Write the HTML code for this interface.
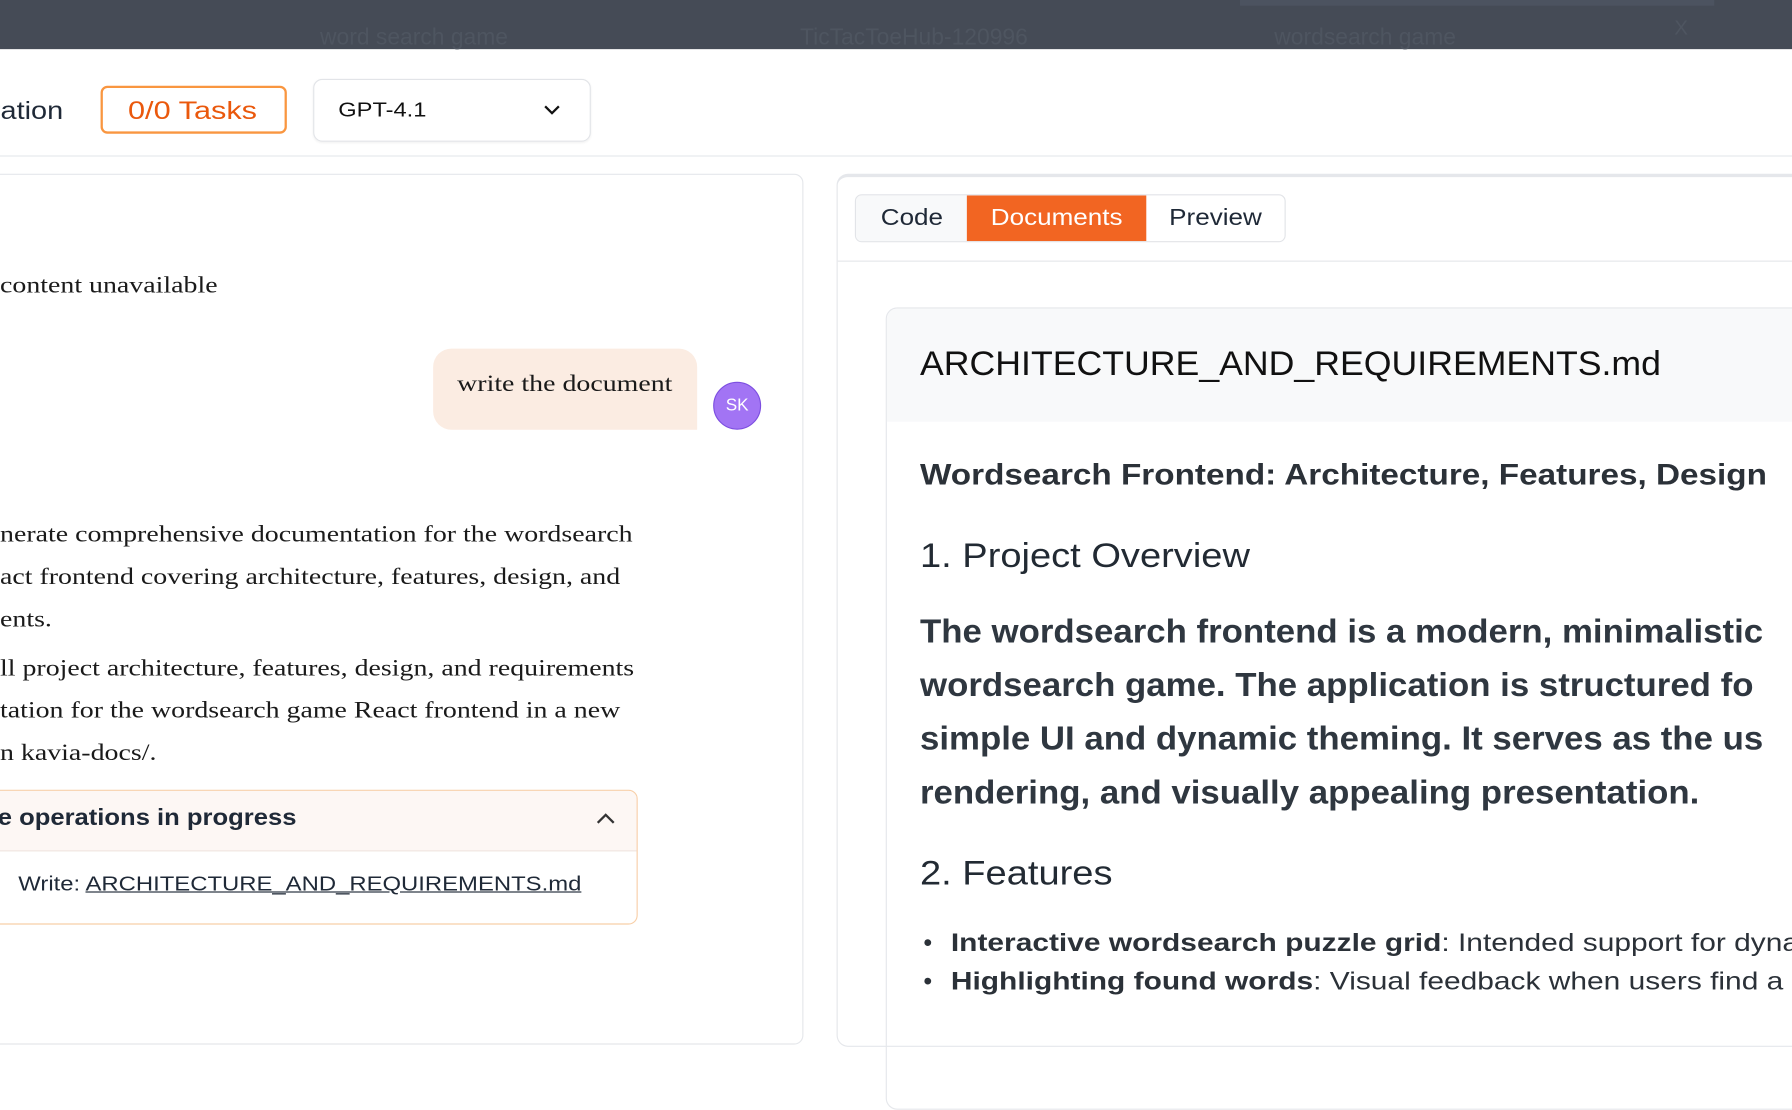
<!DOCTYPE html>
<html><head><meta charset="utf-8"><style>
html,body{margin:0;padding:0;width:1792px;height:980px;overflow:hidden;background:#fff}
#w{position:absolute;left:0;top:0;width:1568px;height:858px;transform:scale(1.142857);transform-origin:0 0;font-family:"Liberation Sans",sans-serif;color:#1f2937}
.a{position:absolute;white-space:nowrap;transform-origin:0 0}
.serif{font-family:"Liberation Serif",serif;font-size:20px;color:#1a1a1a;transform:scaleX(1.22)}
</style></head><body><div id="w">
<div class="a" style="left:0;top:0;width:1568px;height:43px;background:#454b56"></div>
<div class="a" style="left:1085px;top:0;width:415px;height:5px;background:#4c5360"></div>
<div class="a" style="left:280px;top:22px;font-size:20px;color:#4e5560">word search game</div>
<div class="a" style="left:700px;top:22px;font-size:20px;color:#4e5560">TicTacToeHub-120996</div>
<div class="a" style="left:1115px;top:22px;font-size:20px;color:#4e5560">wordsearch game</div>
<div class="a" style="left:1465px;top:14px;font-size:18px;color:#4e5560">X</div>
<div class="a" style="left:0;top:136px;width:1568px;height:1px;background:#e5e7eb"></div>
<div class="a" style="left:-8px;top:84px;font-size:22px;color:#1f2937;transform:scaleX(1.15)">ration</div>
<div class="a" style="left:88px;top:75px;width:159px;height:38px;border:2px solid #f99640;border-radius:6px"></div>
<div class="a" style="left:112px;top:84px;font-size:22px;color:#ea580c;transform:scaleX(1.22)">0/0 Tasks</div>
<div class="a" style="left:274px;top:69px;width:241px;height:53px;border:1px solid #e2e4e8;border-radius:8px;box-shadow:0 1px 2px rgba(0,0,0,.06)"></div>
<div class="a" style="left:296px;top:86px;font-size:18px;color:#111;transform:scaleX(1.15)">GPT-4.1</div>
<svg class="a" style="left:475px;top:90px" width="16" height="12" viewBox="0 0 16 12"><path d="M2 3l6 6 6-6" fill="none" stroke="#111" stroke-width="2"/></svg>

<div class="a" style="left:-10px;top:152px;width:711px;height:760px;border:1px solid #e5e7eb;border-radius:8px"></div>
<div class="a serif" style="left:0;top:239px">content unavailable</div>
<div class="a" style="left:379px;top:305px;width:231px;height:71px;background:#fbece2;border-radius:16px 16px 0 16px"></div>
<div class="a serif" style="left:400px;top:325px">write the document</div>
<div class="a" style="left:624px;top:334px;width:40px;height:40px;border-radius:50%;background:#a274f4;border:1px solid #7c4ee0;color:#fff;font-size:15px;line-height:40px;text-align:center">SK</div>
<div class="a serif" style="left:0;top:450px;line-height:37px">nerate comprehensive documentation for the wordsearch<br>act frontend covering architecture, features, design, and<br>ents.</div>
<div class="a serif" style="left:0;top:567px;line-height:37px">ll project architecture, features, design, and requirements<br>tation for the wordsearch game React frontend in a new<br>n kavia-docs/.</div>
<div class="a" style="left:-10px;top:691px;width:566px;height:116px;border:1px solid #f8cfa8;border-radius:8px;overflow:hidden">
 <div style="height:52px;background:#fdf7f4;border-bottom:1px solid #f0e6e0"></div>
</div>
<div class="a" style="left:-2px;top:705px;font-size:20px;font-weight:bold;color:#1f2937;transform:scaleX(1.12)">e operations in progress</div>
<svg class="a" style="left:521px;top:711px" width="18" height="12" viewBox="0 0 18 12"><path d="M2 9l7-7 7 7" fill="none" stroke="#333" stroke-width="2"/></svg>
<div class="a" style="left:16px;top:763px;font-size:18px;color:#1f2937;transform:scaleX(1.16)">Write: <span style="text-decoration:underline">ARCHITECTURE_AND_REQUIREMENTS.md</span></div>

<div class="a" style="left:732px;top:152px;width:900px;height:760px;border:1px solid #e5e7eb;border-top:3px solid #e5e7eb;border-radius:10px"></div>
<div class="a" style="left:733px;top:228px;width:900px;height:1px;background:#e5e7eb"></div>
<div class="a" style="left:748px;top:170px;width:375px;height:40px;border:1px solid #e2e4e8;border-radius:6px;overflow:hidden;font-size:20px;line-height:40px">
 <div style="position:absolute;left:0;top:0;width:97px;height:40px;background:#f8f9fa;text-align:center;color:#1f2937"><span style="display:inline-block;transform:scaleX(1.14)">Code</span></div>
 <div style="position:absolute;left:97px;top:0;width:157px;height:40px;background:#f26522;text-align:center;color:#fff"><span style="display:inline-block;transform:scaleX(1.14)">Documents</span></div>
 <div style="position:absolute;left:254px;top:0;width:121px;height:40px;text-align:center;color:#1f2937"><span style="display:inline-block;transform:scaleX(1.14)">Preview</span></div>
</div>
<div class="a" style="left:775px;top:269px;width:900px;height:700px;border:1px solid #e5e7eb;border-radius:10px;overflow:hidden">
 <div style="height:99px;background:#f8f9fa"></div>
</div>
<div class="a" style="left:805px;top:302px;font-size:30px;color:#111;transform:scaleX(1.04)">ARCHITECTURE_AND_REQUIREMENTS.md</div>
<div class="a" style="left:805px;top:400px;font-size:26px;font-weight:bold;color:#2b3138;transform:scaleX(1.12)">Wordsearch Frontend: Architecture, Features, Design</div>
<div class="a" style="left:805px;top:470px;font-size:30px;color:#222a33;transform:scaleX(1.11)">1. Project Overview</div>
<div class="a" style="left:805px;top:530px;font-size:29px;font-weight:bold;color:#2f3740;line-height:47px;transform:scaleX(1.05)">The wordsearch frontend is a modern, minimalistic<br>wordsearch game. The application is structured fo<br>simple UI and dynamic theming. It serves as the us<br>rendering, and visually appealing presentation.</div>
<div class="a" style="left:805px;top:748px;font-size:30px;color:#222a33;transform:scaleX(1.11)">2. Features</div>
<div class="a" style="left:808px;top:808px;font-size:22px;color:#2b3138;line-height:34px">•</div>
<div class="a" style="left:808px;top:842px;font-size:22px;color:#2b3138;line-height:34px">•</div>
<div class="a" style="left:832px;top:808px;font-size:22px;color:#2b3138;line-height:34px;transform:scaleX(1.19)"><b>Interactive wordsearch puzzle grid</b>: Intended support for dynamic<br><b>Highlighting found words</b>: Visual feedback when users find a</div>
</div></body></html>
